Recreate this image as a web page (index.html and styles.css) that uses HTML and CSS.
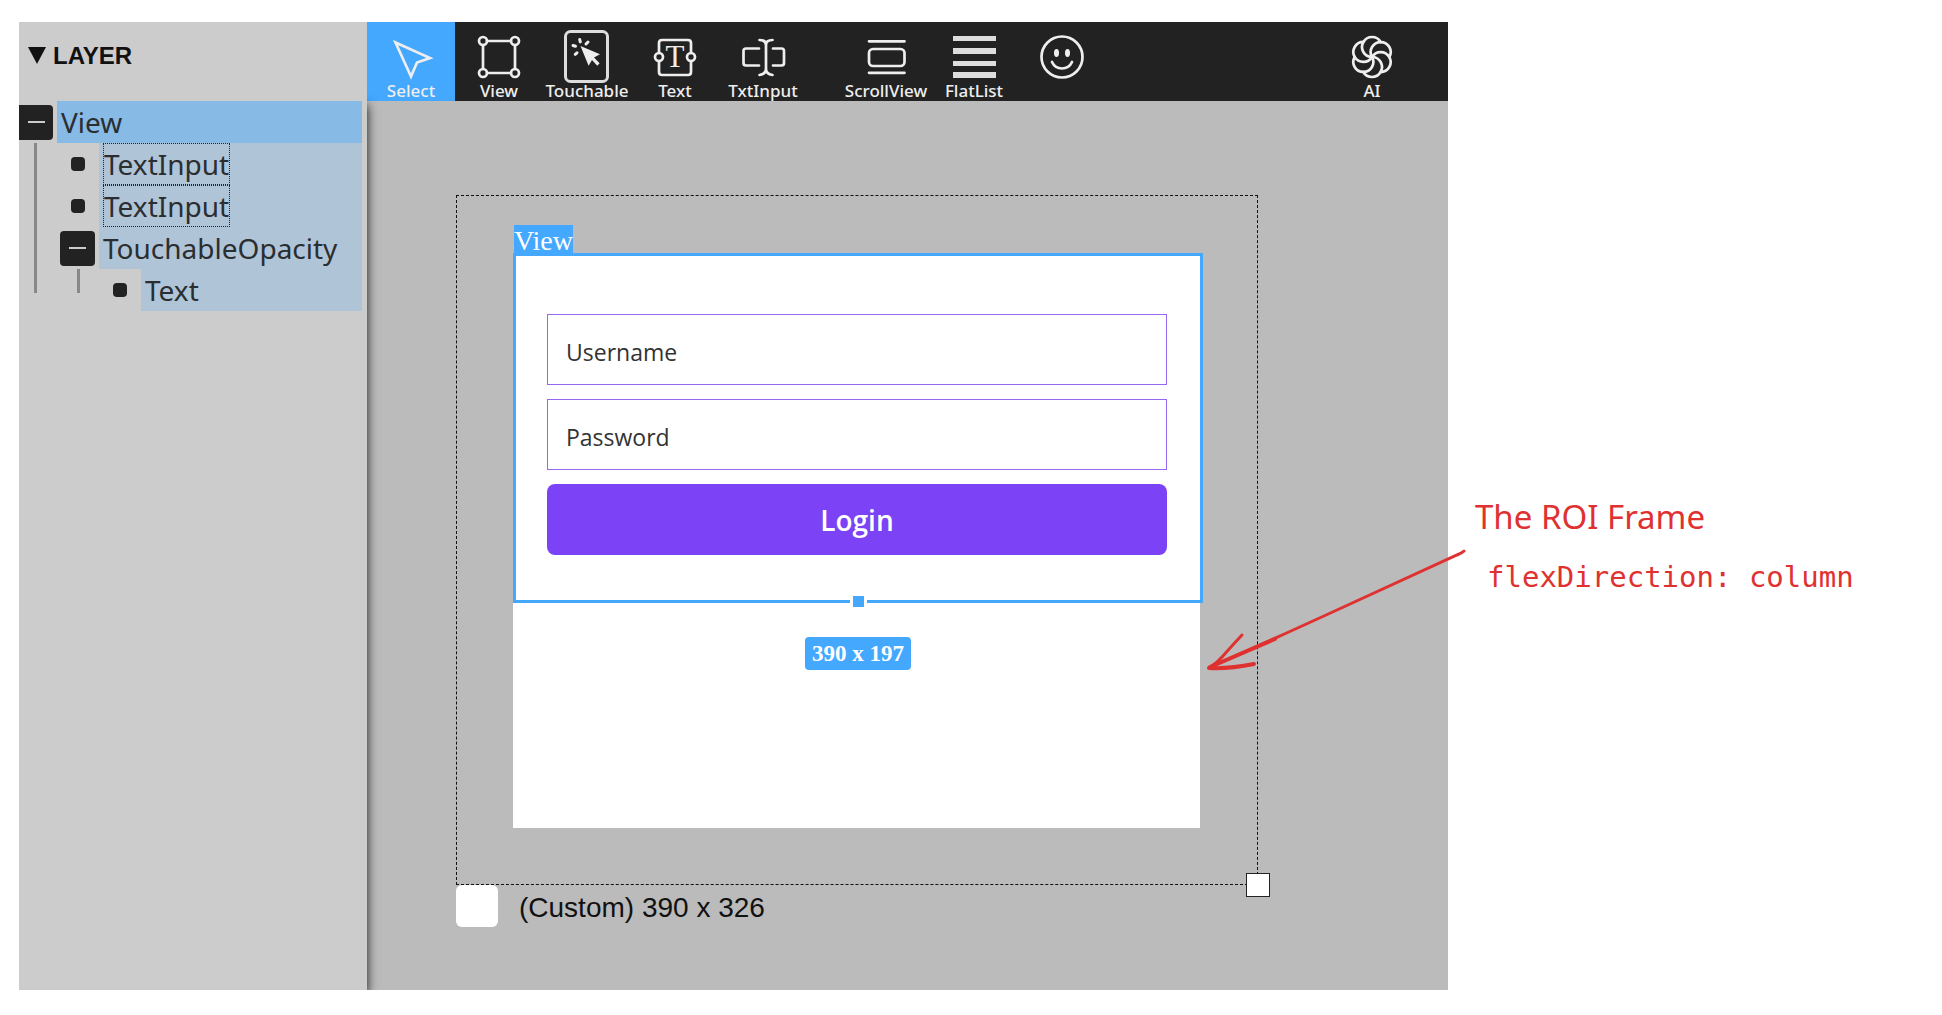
FILE: index.html
```html
<!DOCTYPE html>
<html lang="en">
<head>
<meta charset="utf-8">
<title>Layout editor</title>
<link rel="stylesheet" href="styles.css">
</head>
<body>
<main class="page">
  <div class="editor">
    <aside class="sidebar">
      <h2 class="sidebar-title"><span class="caret"></span>LAYER</h2>
      <div class="tree">
        <div class="node">
          <div class="row row-root"><button class="toggle" aria-label="Collapse View"></button><span class="name name-selected">View</span></div>
          <div class="children">
            <div class="row"><span class="bullet"></span><span class="name"><span class="dotted">TextInput</span></span></div>
            <div class="row"><span class="bullet"></span><span class="name"><span class="dotted">TextInput</span></span></div>
            <div class="node">
              <div class="row"><button class="toggle" aria-label="Collapse TouchableOpacity"></button><span class="name">TouchableOpacity</span></div>
              <div class="children">
                <div class="row"><span class="bullet"></span><span class="name">Text</span></div>
              </div>
            </div>
          </div>
        </div>
      </div>
    </aside>

    <section class="workspace">
      <nav class="toolbar">
        <button class="tool tool-active">
          <svg class="icon" viewBox="0 0 56 56"><path d="M12.500 15.500 47 31 34 35.500 28 49.500z"/></svg>
          <span>Select</span>
        </button>
        <button class="tool">
          <svg class="icon" viewBox="0 0 56 56"><path d="M16 14h24M16 46h24M12 18v24M44 18v24"/><circle cx="12" cy="14" r="4"/><circle cx="44" cy="14" r="4"/><circle cx="12" cy="46" r="4"/><circle cx="44" cy="46" r="4"/></svg>
          <span>View</span>
        </button>
        <button class="tool">
          <svg class="icon" viewBox="0 0 56 56"><rect class="frame-line" x="6.500" y="4.500" width="42" height="50" rx="5"/><path class="solid" d="M21.500 19 41 27.300 35 30.500 40.600 36.300 38.300 38.700 33 33 29.600 38.700z"/><path class="ray" d="M20.700 12.500l.6 2.400M29 15l-2 2M14 18.500l2.500 .8M16.200 27.300l1.800-1.500"/></svg>
          <span>Touchable</span>
        </button>
        <button class="tool">
          <svg class="icon" viewBox="0 0 56 56"><path d="M12 26V16q0-3 3-3h26q3 0 3 3v10M12 34v11q0 3 3 3h26q3 0 3-3V34"/><circle cx="12" cy="30" r="4"/><circle cx="44" cy="30" r="4"/><text class="glyph" x="28" y="40">T</text></svg>
          <span>Text</span>
        </button>
        <button class="tool">
          <svg class="icon" viewBox="0 0 56 56"><path d="M24 21.500H11q-2.500 0-2.500 2.500v12q0 2.500 2.500 2.500h13M38 21.500h8.500q2.500 0 2.500 2.500v12q0 2.500-2.500 2.500H38M24.500 13q6.500 0 6.500 5 0-5 6.500-5M31 18v24M24.500 48q6.500-1 6.500-6 0 5 6.500 6"/></svg>
          <span>TxtInput</span>
        </button>
        <button class="tool tool-group">
          <svg class="icon" viewBox="0 0 56 56"><path d="M11 14.300h35.500M11 45.800h35.500"/><rect x="11" y="22" width="35.500" height="17" rx="4"/></svg>
          <span>ScrollView</span>
        </button>
        <button class="tool">
          <svg class="icon" viewBox="0 0 56 56"><path class="bars" d="M7 9h43v5H7zM7 21h43v6H7zM7 34h43v5H7zM7 45h43v6H7z"/></svg>
          <span>FlatList</span>
        </button>
        <button class="tool" aria-label="Icon">
          <svg class="icon" viewBox="0 0 56 56"><circle cx="28" cy="30" r="20.500"/><path d="M18 35q3 6.500 10 6.500T38 35"/><ellipse class="solid" cx="22.500" cy="26" rx="2.500" ry="4"/><ellipse class="solid" cx="33.500" cy="26" rx="2.500" ry="4"/></svg>
        </button>
        <button class="tool tool-end">
          <svg class="icon" viewBox="-28 -30 56 56"><path id="petal" d="M0 0A10 10 0 1 1 8.700-15"/><use href="#petal" transform="rotate(60)"/><use href="#petal" transform="rotate(120)"/><use href="#petal" transform="rotate(180)"/><use href="#petal" transform="rotate(240)"/><use href="#petal" transform="rotate(300)"/></svg>
          <span>AI</span>
        </button>
      </nav>

      <div class="canvas">
        <div class="artboard">
          <div class="device">
            <form class="login">
              <input class="field" type="text" placeholder="Username" aria-label="Username">
              <input class="field" type="password" placeholder="Password" aria-label="Password">
              <button class="submit" type="button">Login</button>
              <div class="selection">
                <span class="selection-name">View</span>
                <span class="selection-handle"></span>
                <span class="selection-size">390 x 197</span>
              </div>
            </form>
          </div>
          <span class="corner"></span>
        </div>
        <div class="caption"><span class="swatch"></span>(Custom) 390 x 326</div>
      </div>
    </section>
  </div>

  <aside class="note">
    <p class="note-title">The ROI Frame</p>
    <p class="note-code">flexDirection: column</p>
    <svg class="arrow" viewBox="0 0 264 128"><path d="M259 6Q257 8 252 10L132 65Q60 98 8 121"/><path class="thick" d="M70 94Q35 109 5 122"/><path d="M37 90Q24 104 18 111T4 123"/><path class="thick" d="M4 123Q24 124 49 119"/></svg>
  </aside>
</main>
</body>
</html>
```
FILE: styles.css
```css
* { box-sizing: border-box; }

body {
  margin: 0;
  background: #fff;
  font-family: "Noto Sans", sans-serif;
}

button {
  margin: 0;
  padding: 0;
  border: 0;
  font: inherit;
}

.page {
  display: flex;
  min-height: 100vh;
  padding: 22px 19px 25px;
}

.editor {
  display: flex;
  flex: 1;
  min-width: 0;
  overflow: hidden;
  background: #bbb;
}

/* Layer panel */
.sidebar {
  display: flex;
  flex-direction: column;
  flex: 0 0 348px;
}

.sidebar-title {
  position: relative;
  z-index: 2;
  display: flex;
  align-items: center;
  gap: 7px;
  height: 79px;
  margin: 0;
  padding: 0 9px 12px;
  background: #ccc;
  color: #111;
  font: bold 24px/28px "Liberation Sans", Arial, sans-serif;
}

.caret {
  border: 9px solid transparent;
  border-top: 17px solid #111;
  border-bottom: 0;
}

.tree {
  position: relative;
  z-index: 1;
  flex: 1;
  padding-right: 5px;
  background: #ccc;
  box-shadow: 0 4px 10px rgba(0, 0, 0, .9);
  color: #2a2e30;
  font-size: 28px;
  line-height: 42px;
}

.row {
  display: flex;
  align-items: center;
  height: 42px;
}

.toggle {
  flex: none;
  display: grid;
  place-items: center;
  width: 35px;
  height: 35px;
  margin-right: 4px;
  border-radius: 4px;
  background: #222;
}

.row-root .toggle {
  width: 34px;
  border-radius: 0 4px 4px 0;
}

.toggle::after {
  content: "";
  width: 17px;
  height: 2px;
  background: #ccc;
}

.bullet {
  flex: none;
  width: 14px;
  height: 14px;
  margin: 0 14px 0 11px;
  border-radius: 4px;
  background: #222;
}

.name {
  flex: 1;
  padding-left: 4px;
  background: #b0c4d8;
}

.name-selected { background: #88bae6; }

.dotted {
  display: inline-block;
  height: 42px;
  padding: 0 1px;
  outline: 1px dotted #222;
  outline-offset: -1px;
}

.children {
  margin-left: 15px;
  padding-left: 26px;
  background: linear-gradient(#888, #888) 0 0 / 3px calc(100% - 18px) no-repeat;
}

.children .children {
  margin-left: 17px;
  padding-left: 25px;
}

/* Toolbar */
.workspace {
  display: flex;
  flex-direction: column;
  flex: 1;
  min-width: 0;
}

.toolbar {
  display: flex;
  height: 79px;
  background: #222;
}

.tool {
  display: flex;
  flex-direction: column;
  align-items: center;
  flex: none;
  width: 88px;
  height: 79px;
  padding-top: 5px;
  background: none;
  color: #eee;
  font-size: 17px;
  font-weight: 500;
  line-height: 16px;
  white-space: nowrap;
}

.tool-active { background: #44a8ff; }
.tool-group { margin-left: 35px; }
.tool-end { margin: 0 32px 0 auto; }

.icon {
  width: 56px;
  height: 56px;
  fill: none;
  stroke: #eee;
  stroke-width: 2.700;
  stroke-linecap: round;
}

.icon .solid, .icon .glyph, .icon .bars {
  fill: #eee;
  stroke: none;
}

.icon .bars { fill: #ddd; }
.icon .ray { stroke-width: 3; }
.icon .frame-line { stroke: #ddd; stroke-width: 3; }

.glyph {
  font: 31px "Liberation Serif", serif;
  text-anchor: middle;
}

/* Canvas */
.canvas {
  flex: 1;
  padding: 94px 89px 0;
}

.artboard {
  position: relative;
  max-width: 802px;
  padding: 59px 57px 56px 56px;
  border: 1px dashed #111;
}

.device {
  min-height: 573px;
  background: #fff;
}

.login {
  position: relative;
  display: flex;
  flex-direction: column;
  gap: 14px;
  padding: 59px 33px 46px 34px;
}

.field {
  width: 100%;
  height: 71px;
  padding: 4px 18px 0;
  border: 1px solid #9668f2;
  border-radius: 0;
  background: #fff;
  font: 23px "Open Sans", sans-serif;
}

.field::placeholder {
  color: #333;
  opacity: 1;
}

.submit {
  height: 71px;
  border-radius: 8px;
  background: #7c42f5;
  color: #fff;
  font: 600 28px "Open Sans", sans-serif;
}

.selection {
  position: absolute;
  inset: -2px -3px -2px 0;
  border: 3px solid #44a8ff;
  pointer-events: none;
  color: #fff;
  font-family: "Liberation Serif", "Times New Roman", serif;
}

.selection-name {
  position: absolute;
  left: -2px;
  bottom: 100%;
  background: #44a8ff;
  font-size: 28px;
  line-height: 31px;
}

.selection-handle {
  position: absolute;
  left: 50%;
  bottom: -10px;
  width: 17px;
  height: 17px;
  margin-left: -8px;
  border: 3px solid #fff;
  background: #44a8ff;
}

.selection-size {
  position: absolute;
  top: 100%;
  left: 50%;
  transform: translateX(-50%);
  margin-top: 37px;
  padding: 0 7px;
  border-radius: 4px;
  background: #44a8ff;
  font-size: 23px;
  font-weight: bold;
  line-height: 33px;
  white-space: nowrap;
}

.corner {
  position: absolute;
  right: -13px;
  bottom: -13px;
  width: 24px;
  height: 24px;
  border: 1px solid #222;
  background: #fff;
}

.caption {
  display: flex;
  align-items: center;
  gap: 21px;
  color: #111;
  font: 28px/46px "Liberation Sans", Arial, sans-serif;
}

.swatch {
  align-self: flex-start;
  width: 42px;
  height: 42px;
  border-radius: 6px;
  background: #fff;
}

/* Annotation */
.note {
  position: relative;
  flex: 0 0 475px;
  padding: 474px 0 0 27px;
  color: #e03131;
  white-space: nowrap;
}

.note p { margin: 0; }

.note-title {
  font: 33px/42px "Noto Sans", cursive;
}

.note .note-code {
  margin-top: 18px;
  padding-left: 12px;
  font: 29px/42px "DejaVu Sans Mono", monospace;
}

.arrow {
  position: absolute;
  top: 523px;
  left: -243px;
  width: 264px;
  height: 128px;
  fill: none;
  stroke: #e03131;
  stroke-width: 3;
  stroke-linecap: round;
}

.arrow .thick { stroke-width: 4; }
```
